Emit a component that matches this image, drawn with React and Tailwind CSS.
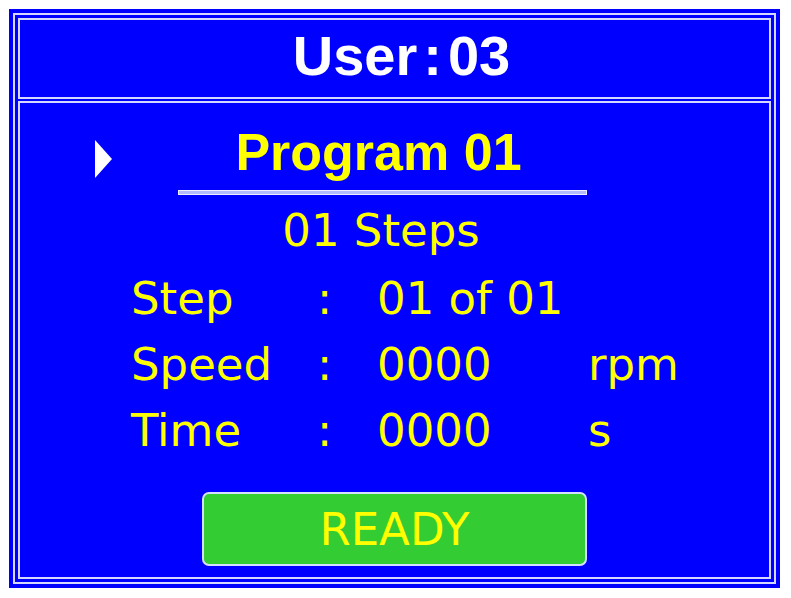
import React from 'react';

const rows = [
  { label: 'Step', value: '01 of 01', unit: '' },
  { label: 'Speed', value: '0000', unit: 'rpm' },
  { label: 'Time', value: '0000', unit: 's' },
];

export default function App() {
  return (
    <div className="w-[791px] h-[598px] bg-white pt-[9px] pl-[9px]">
      <div className="w-[771px] h-[579px] bg-[#0000ff] p-[4px]">
        <div className="h-full border-2 border-[#d4d8ff] p-[3px] flex flex-col gap-[2px]">
          {/* header */}
          <div className="h-[81px] border-2 border-[#d4d8ff] pt-[8px] pl-[14px] flex justify-center">
            <div className="flex font-['Liberation_Sans',sans-serif] font-bold text-[56px] leading-[56px] text-white">
              <span>User</span>
              <span className="mx-[6px]">:</span>
              <span>03</span>
            </div>
          </div>

          {/* body */}
          <div className="flex-1 border-2 border-[#d4d8ff] pt-[23px] font-['DejaVu_Sans',sans-serif] text-[#ffff00]">
            <div className="flex">
              <svg className="ml-[75px] mt-[14px]" width="18" height="38" viewBox="0 0 18 38">
                <polygon points="0,0 17,19 0,38" fill="#ffffff" />
              </svg>
              <div className="ml-[65px] w-[409px] flex flex-col">
                <div className="pr-[8px] text-center font-['Liberation_Sans',sans-serif] font-bold text-[52px] leading-[53px]">
                  Program 01
                </div>
                <div className="mt-[11px] h-[5px] border border-[#eceeff] bg-[#b4baff]" />
                <div className="mt-[13px] pr-[3px] text-center text-[45px] leading-[45px]">01 Steps</div>
              </div>
            </div>

            <div className="mt-[23px] ml-[111px] flex flex-col gap-[21px]">
              {rows.map((r) => (
                <div key={r.label} className="grid grid-cols-[186px_60px_211px_1fr] text-[45px] leading-[45px]">
                  <span>{r.label}</span>
                  <span>:</span>
                  <span>{r.value}</span>
                  <span>{r.unit}</span>
                </div>
              ))}
            </div>

            <div className="mt-[39px] ml-[182px] w-[385px] h-[74px] rounded-[7px] border-2 border-[#d4e0ff] bg-[#33cc33] flex items-center justify-center text-[45px] leading-[45px]">
              READY
            </div>
          </div>
        </div>
      </div>
    </div>
  );
}
